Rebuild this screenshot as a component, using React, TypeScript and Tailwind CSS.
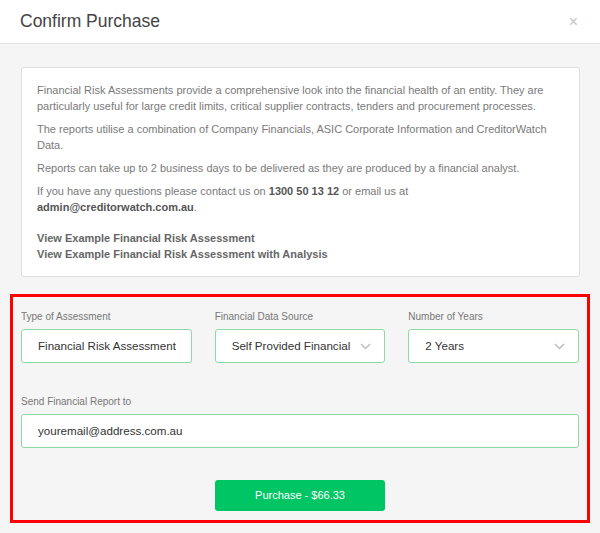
import React from 'react'

const Chevron = () => (
  <svg width="11" height="7" viewBox="0 0 11 7" className="shrink-0">
    <path d="M1 1 L5.5 5.5 L10 1" fill="none" stroke="#bdbdbd" strokeWidth="1.5" />
  </svg>
)

const Field = ({ label, value, select }: { label: string; value: string; select?: boolean }) => (
  <div className="flex flex-col min-w-0">
    <div className="text-[10px] leading-[14px] text-[#777] mb-[5px]">{label}</div>
    <div className="h-[34px] bg-white border border-[#8ed8a6] rounded-[3px] flex items-center justify-between gap-[6px] pl-[16px] pr-[13px] overflow-hidden">
      <span className="text-[11.6px] text-[#333] whitespace-nowrap overflow-hidden">{value}</span>
      {select && <Chevron />}
    </div>
  </div>
)

const App = () => {
  return (
    <div className="w-[600px] h-[533px] bg-[#f5f5f5] font-['Liberation_Sans',Arial,sans-serif] overflow-hidden">
      <div className="h-[44px] bg-white border-b border-[#e2e2e2] flex items-center justify-between pl-[20px] pr-[22px]">
        <div className="text-[17.5px] text-[#444] font-light">Confirm Purchase</div>
        <div className="text-[16px] text-[#c4c4c4] leading-none">×</div>
      </div>

      <div className="pt-[23px] pl-[21px] pr-[20px]">
        <div className="bg-white border border-[#dedede] rounded-[3px] h-[210px] pt-[14px] px-[15px] text-[11px] leading-[16px] text-[#7a7a7a]">
          <p className="mb-[7px]">
            Financial Risk Assessments provide a comprehensive look into the financial health of an entity. They are particularly useful for large credit limits, critical supplier contracts, tenders and procurement processes.
          </p>
          <p className="mb-[7px]">
            The reports utilise a combination of Company Financials, ASIC Corporate Information and CreditorWatch Data.
          </p>
          <p className="mb-[7px]">
            Reports can take up to 2 business days to be delivered as they are produced by a financial analyst.
          </p>
          <p className="pr-[100px]">
            If you have any questions please contact us on <b className="text-[#555]">1300 50 13 12</b> or email us at{' '}
            <b className="text-[#555]">admin@creditorwatch.com.au</b>.
          </p>
          <div className="font-bold text-[#666] mt-[15px] leading-[16px]">
            <div>View Example Financial Risk Assessment</div>
            <div>View Example Financial Risk Assessment with Analysis</div>
          </div>
        </div>
      </div>

      <div className="mt-[17px] ml-[10px] w-[580px] border-[3px] border-[#ff0000] pt-[13px] pb-[9px] px-[8px]">
        <div className="grid grid-cols-3 gap-[23px]">
          <Field label="Type of Assessment" value="Financial Risk Assessment" />
          <Field label="Financial Data Source" value="Self Provided Financial" select />
          <Field label="Number of Years" value="2 Years" select />
        </div>
        <div className="mt-[32px]">
          <Field label="Send Financial Report to" value="youremail@address.com.au" />
        </div>
        <div className="flex justify-center mt-[32px]">
          <button className="w-[170px] h-[31px] bg-[#00c565] rounded-[3px] text-white text-[11px]">
            Purchase - $66.33
          </button>
        </div>
      </div>
    </div>
  )
}

export default App
